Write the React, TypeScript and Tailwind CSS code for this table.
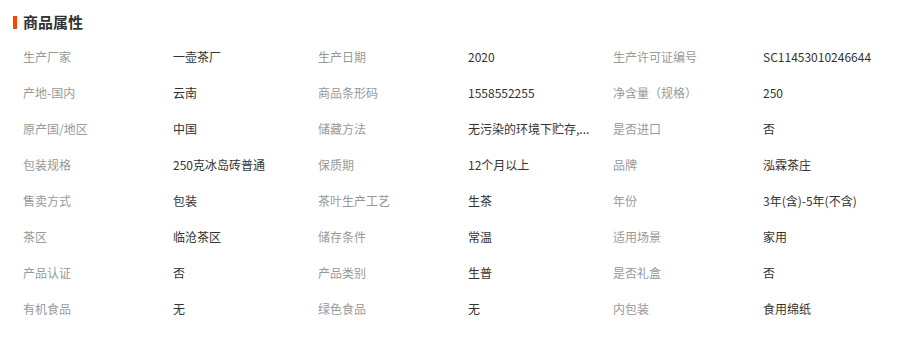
import React from 'react';

const rows: [string, string, string, string, string, string][] = [
  ['生产厂家', '一壶茶厂', '生产日期', '2020', '生产许可证编号', 'SC11453010246644'],
  ['产地-国内', '云南', '商品条形码', '1558552255', '净含量（规格）', '250'],
  ['原产国/地区', '中国', '储藏方法', '无污染的环境下贮存,...', '是否进口', '否'],
  ['包装规格', '250克冰岛砖普通', '保质期', '12个月以上', '品牌', '泓霖茶庄'],
  ['售卖方式', '包装', '茶叶生产工艺', '生茶', '年份', '3年(含)-5年(不含)'],
  ['茶区', '临沧茶区', '储存条件', '常温', '适用场景', '家用'],
  ['产品认证', '否', '产品类别', '生普', '是否礼盒', '否'],
  ['有机食品', '无', '绿色食品', '无', '内包装', '食用绵纸'],
];

export default function App() {
  return (
    <div className="w-[914px] h-[337px] bg-white font-['Microsoft_YaHei','Noto_Sans_CJK_SC',sans-serif] overflow-hidden">
      {/* Header */}
      <div className="flex items-center h-[16px] mt-[14px] pl-[13px]">
        <span className="w-[4px] h-[13px] bg-[#ff4400]"></span>
        <h2 className="ml-[6px] text-[15px] leading-[16px] font-bold text-[#333]">商品属性</h2>
      </div>

      {/* Attribute grid */}
      <div className="mt-[9px] pl-[23px] grid grid-cols-[150px_145px_150px_145px_150px_145px] text-[12px] leading-[36px]">
        {rows.map((r, i) => (
          <React.Fragment key={i}>
            <div className="text-[#999]">{r[0]}</div>
            <div className="text-[#333]">{r[1]}</div>
            <div className="text-[#999]">{r[2]}</div>
            <div className="text-[#333] whitespace-nowrap">{r[3]}</div>
            <div className="text-[#999]">{r[4]}</div>
            <div className="text-[#333] whitespace-nowrap">{r[5]}</div>
          </React.Fragment>
        ))}
      </div>
    </div>
  );
}
